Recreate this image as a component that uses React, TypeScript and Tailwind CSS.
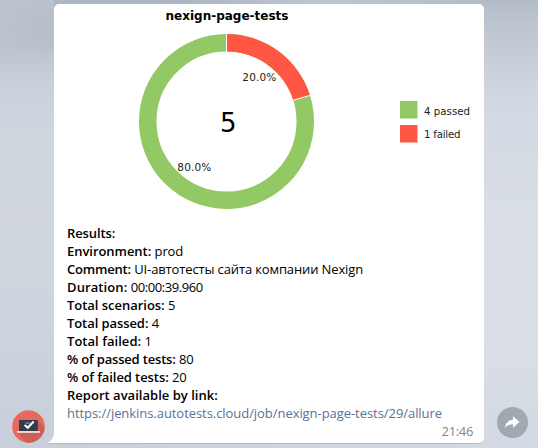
const rows: [string, string, string, string][] = [
  ['Results:', '', 'tracking-[-0.1px]', ''],
  ['Environment:', 'prod', 'tracking-[-0.05px]', 'tracking-[-0.1px]'],
  ['Comment:', 'UI-автотесты сайта компании Nexign', 'tracking-[-0.2px]', 'tracking-[-0.13px]'],
  ['Duration:', '00:00:39.960', 'tracking-[0.1px]', 'tracking-[-0.42px]'],
  ['Total scenarios:', '5', 'tracking-[-0.03px]', ''],
  ['Total passed:', '4', 'tracking-[-0.08px]', ''],
  ['Total failed:', '1', 'tracking-[0.04px]', ''],
  ['% of passed tests:', '80', 'tracking-[-0.18px]', 'tracking-[-0.2px]'],
  ['% of failed tests:', '20', 'tracking-[-0.08px]', 'tracking-[-0.2px]'],
  ['Report available by link:', '', 'tracking-[0.02px]', ''],
];

function Chart() {
  return (
    <svg width="430" height="216" viewBox="54 4 430 216" className="block font-['DejaVu_Sans',sans-serif]">
      <circle cx="226.5" cy="121.5" r="78.75" fill="none" stroke="#92c964" strokeWidth="17.5" />
      <path d="M226.5 34A87.5 87.5 0 0 1 310 95.4L293.4 100.7A70 70 0 0 0 226.5 51.5Z" fill="#ff5744" />
      <path d="M226.5 33.5V52M310.5 95.3L293 100.3" stroke="#fff" strokeWidth="1" />
      <text x="165.5" y="20" textLength="123" lengthAdjust="spacingAndGlyphs" fontSize="11.8" fontWeight="700">nexign-page-tests</text>
      <text x="242.3" y="81" textLength="34" fontSize="10.5" fill="#222">20.0%</text>
      <text x="177.3" y="170.5" textLength="34" fontSize="10.5" fill="#222">80.0%</text>
      <text x="228.2" y="131.5" textAnchor="middle" fontSize="26">5</text>
      <path d="M400 101h17.5v17.5h-17.5z" fill="#92c964" />
      <path d="M400 125h17.5v17.5h-17.5z" fill="#ff5744" />
      <text x="424" y="114.5" textLength="46" fontSize="10.2" fill="#222">4 passed</text>
      <text x="424" y="137.5" textLength="36.5" fontSize="10.2" fill="#222">1 failed</text>
    </svg>
  );
}

function Avatar() {
  return (
    <svg width="34" height="34" viewBox="0 0 34 34" className="block">
      <circle cx="16.5" cy="16.5" r="16.3" fill="#e66a5d" />
      <path d="M26 11L32.600 17.600A16.300 16.300 0 0 1 15 32.700L5 22.700Z" fill="#cf5f56" />
      <path d="M7 10h18.800v11.500h-18.800z" fill="#353b4b" />
      <path d="M5 21.200h23v1.500H5z" fill="#fff" />
      <path d="M12.700 15l3 2.800 6-6.300" fill="none" stroke="#fff" strokeWidth="2.100" />
      <path d="M13.500 13h4.300" stroke="#8e949f" strokeWidth="1.200" />
    </svg>
  );
}

export default function App() {
  return (
    <div className="flex h-[448px] w-[538px] overflow-hidden bg-[linear-gradient(90deg,#b7c0cb_0px,#adb7c3_60px,#acb6c2_180px,#bdc5cf_320px,#b0bac5_538px)] pt-1">
      <div className="-mt-1 flex w-[54px] shrink-0 items-end bg-[radial-gradient(ellipse_35px_32px_at_42px_25px,#aeb8c466,transparent),linear-gradient(180deg,#bac3ce_0px,#bac2cd_45px,#cbd1db_85px,#d0d6de_140px,#d1d7dd_220px,#ced4de_320px,#c9cfda_448px)] pb-[4px] pl-3">
        <Avatar />
      </div>
      <div className="relative w-[430px] shrink-0">
        <div className="absolute bottom-0 left-0 h-[12px] w-[430px] bg-[linear-gradient(90deg,#c9cfda,#d3d9e2)]" />
        <div className="relative flex h-[439px] w-[430px] flex-col rounded-[5px] bg-white font-['Open_Sans',sans-serif] text-[13px] leading-[18px] text-black shadow-[0_1px_0_#b5bdc9]">
          <svg width="12" height="13" viewBox="0 0 12 13" className="absolute -bottom-px -left-1.5">
            <path d="M0 12H12V13H1Z" fill="#b5bdc9" />
            <path d="M6 0V2Q5.500 8.500 .5 11.200Q0 12 1 12H12V0z" fill="#fff" />
          </svg>
          <div className="h-[220px] shrink-0 overflow-hidden rounded-t-[5px]">
            <Chart />
          </div>
          <div className="flex flex-col pl-[13px] whitespace-nowrap">
            {rows.map(([label, value, labelTracking, valueTracking]) => (
              <p key={label}>
                <b className={`font-semibold ${labelTracking}`}>{label}</b>{' '}
                <span className={valueTracking}>{value}</span>
              </p>
            ))}
            <p className="tracking-[-0.055px] text-[#5b7197]">https://jenkins.autotests.cloud/job/nexign-page-tests/29/allure</p>
            <p className="self-end pr-[11px] tracking-[-0.35px] text-[#80858c]">21:46</p>
          </div>
        </div>
      </div>
      <div className="-mt-1 flex grow items-end bg-[linear-gradient(180deg,#b2bcc7_0px,#bdc5d0_25px,#cbd1db_70px,#d3d9e2_110px,#dadfe7_240px,#dadfe7_330px,#d3d9e2_448px)] pb-[10px] pl-[13px]">
        <svg width="31" height="31" viewBox="0 0 31 31">
          <circle cx="15.5" cy="15.5" r="15.5" fill="#a0a8b1" />
          <path d="M16 9.3L22.5 15L16 20.8V17.3C12.500 17.300 10 18.300 8 21C8.300 16.500 11 13 16 12.800Z" fill="#fff" />
        </svg>
      </div>
    </div>
  );
}
